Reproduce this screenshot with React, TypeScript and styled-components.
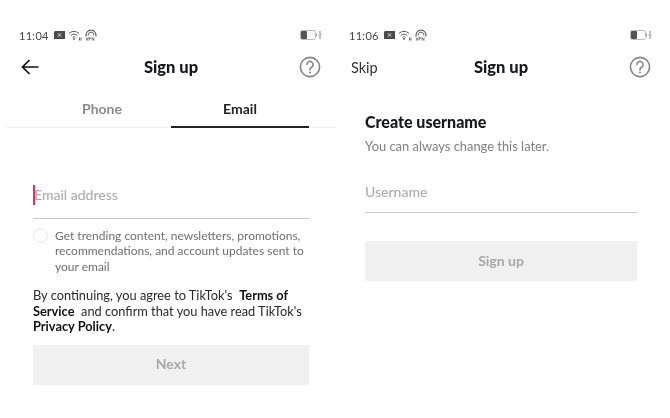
import styled, { createGlobalStyle } from "styled-components";

const GlobalStyle = createGlobalStyle`
  html, body {
    margin: 0;
    padding: 0;
    background: #fff;
  }
  * {
    box-sizing: border-box;
  }
`;

const Page = styled.div`
  width: 670px;
  height: 418px;
  padding-left: 6px;
  display: flex;
  overflow: hidden;
  background: #fff;
  font-family: "Lato", "Open Sans", sans-serif;
  filter: blur(0.35px);
`;

const Screen = styled.section`
  width: 330px;
  display: flex;
  flex-direction: column;
`;

const StatusBar = styled.div`
  height: 16px;
  margin-top: 27px;
  padding: 0 14px 0 13px;
  display: flex;
  align-items: center;
  justify-content: space-between;
`;

const StatusLeft = styled.div`
  display: flex;
  align-items: center;
  gap: 3px;
`;

const Time = styled.span`
  font-size: 11px;
  color: #444;
  letter-spacing: 0.3px;
  margin-right: 2px;
`;

const Header = styled.header`
  height: 34px;
  margin-top: 7px;
  padding: 0 15px 0 15px;
  display: grid;
  grid-template-columns: 40px 1fr 40px;
  align-items: center;
`;

const HeaderLeft = styled.div`
  display: flex;
  align-items: center;
`;

const HeaderRight = styled.div`
  display: flex;
  justify-content: flex-end;
`;

const Title = styled.h1`
  margin: 0;
  text-align: center;
  font-size: 16.5px;
  font-weight: 900;
  color: #16181f;
`;

const SkipLink = styled.span`
  font-size: 14.5px;
  color: #333;
`;

const Tabs = styled.div`
  height: 37px;
  margin-top: 7px;
  padding: 0 27px;
  display: grid;
  grid-template-columns: 138px 138px;
  border-bottom: 1px solid #f0f0f0;
`;

const Tab = styled.div<{ $active?: boolean }>`
  display: flex;
  align-items: center;
  justify-content: center;
  height: 37px;
  padding-bottom: ${(p) => (p.$active ? "0" : "2px")};
  font-size: 14px;
  font-weight: 700;
  color: ${(p) => (p.$active ? "#222" : "#8a8a8a")};
  border-bottom: ${(p) => (p.$active ? "2px solid #222" : "none")};
`;

const Body = styled.div<{ $top: number; $side: number }>`
  padding: ${(p) => p.$top}px ${(p) => p.$side}px 0;
  display: flex;
  flex-direction: column;
`;

const FieldRow = styled.div<{ $height: number }>`
  height: ${(p) => p.$height}px;
  display: flex;
  align-items: flex-start;
  border-bottom: 1px solid #c9c9c9;
`;

const Caret = styled.span`
  width: 2px;
  height: 20px;
  background: #d8336a;
  margin-top: 2px;
  margin-right: -1px;
  flex: none;
`;

const Placeholder = styled.span<{ $top: number }>`
  font-size: 14px;
  font-weight: 500;
  line-height: 22px;
  color: #adadad;
  padding-top: ${(p) => p.$top}px;
`;

const OptIn = styled.div`
  margin-top: 9px;
  display: flex;
  gap: 7px;
`;

const Radio = styled.span`
  width: 15px;
  height: 15px;
  border: 1px solid #e4e4e4;
  border-radius: 50%;
  flex: none;
`;

const OptInText = styled.p`
  margin: 0;
  width: 256px;
  font-size: 12px;
  line-height: 15.4px;
  color: #6f6f6f;
`;

const Legal = styled.p`
  margin: 14px 0 0;
  font-size: 12.8px;
  line-height: 15.5px;
  color: #2a2a2a;

  b {
    font-weight: 700;
    color: #111;
  }
`;

const SubmitButton = styled.button<{ $top: number }>`
  height: 40px;
  margin-top: ${(p) => p.$top}px;
  padding: 0 0 2px;
  border: none;
  background: #f0f0f0;
  font-family: inherit;
  font-size: 14px;
  font-weight: 700;
  color: #a9a9a9;
`;

const Heading = styled.h2`
  margin: 0;
  font-size: 16px;
  font-weight: 900;
  line-height: 20px;
  color: #16181f;
`;

const Subtitle = styled.p`
  margin: 6px 0 0;
  font-size: 12.9px;
  line-height: 16px;
  color: #808080;
`;

const BackIcon = () => (
  <svg width="18" height="16" viewBox="0 0 18 16" fill="none" stroke="#111" strokeWidth="1.7">
    <path d="M17.5 8H1.5M8.5 1L1.5 8l7 7" />
  </svg>
);

const HelpIcon = () => (
  <svg width="22" height="22" viewBox="0 0 22 22" fill="none" stroke="#858585" strokeWidth="1.6">
    <circle cx="11" cy="11" r="9.6" />
    <path d="M7.9 8.600a3.100 3.100 0 1 1 4.700 2.600c-1 .6-1.600 1.200-1.600 2.300v.4" strokeLinecap="round" />
    <circle cx="11" cy="16.400" r="1" fill="#858585" stroke="none" />
  </svg>
);

const SimIcon = () => (
  <svg width="11" height="8" viewBox="0 0 11 8">
    <path d="M1 0h10v8H0V1z" fill="#4a4a4a" />
    <path d="M3.800 2.200l3.400 3.600M7.200 2.200L3.800 5.800" stroke="#ddd" strokeWidth="1" />
  </svg>
);

const WifiIcon = () => (
  <svg width="14" height="11" viewBox="0 0 14 11" fill="none" stroke="#555" strokeWidth="1">
    <path d="M1 3.500c3-2.800 7-2.800 10 0M2.800 5.500c2-1.800 4.400-1.800 6.400 0M4.600 7.400c1-.9 1.800-.9 2.800 0" />
    <circle cx="6" cy="9" r=".9" fill="#555" stroke="none" />
    <path d="M11.500 7.500v3M13 7.500v3" strokeWidth=".9" />
  </svg>
);

const VpnIcon = () => (
  <svg width="12" height="12" viewBox="0 0 12 12" fill="none" stroke="#555">
    <path d="M1 7.500C.6 3.500 3 1 6 1s5.400 2.500 5 6.500" strokeWidth="1.100" />
    <path d="M3.200 6.500C3 4.500 4.300 3.200 6 3.200s3 1.300 2.800 3.300" strokeWidth="1" />
    <path d="M1 8.500l1 3 1-3M4 11.500v-3h1.200v1.400H4M7 11.500v-3l2 3v-3" strokeWidth=".7" />
  </svg>
);

const BatteryIcon = () => (
  <svg width="22" height="10" viewBox="0 0 22 10" fill="none">
    <rect x=".5" y=".5" width="15" height="9" rx="2" stroke="#bbb" />
    <rect x="1" y="1" width="6" height="8" rx="1" fill="#555" />
    <path d="M16.500 3.500v3" stroke="#999" />
    <path d="M20 1v3M20 6v3M18.500 5h3" stroke="#666" strokeWidth=".8" />
  </svg>
);

const Status = ({ time }: { time: string }) => (
  <StatusBar>
    <StatusLeft>
      <Time>{time}</Time>
      <SimIcon />
      <WifiIcon />
      <VpnIcon />
    </StatusLeft>
    <BatteryIcon />
  </StatusBar>
);

const App = () => (
  <>
    <GlobalStyle />
    <Page>
      <Screen>
        <Status time="11:04" />
        <Header>
          <HeaderLeft>
            <BackIcon />
          </HeaderLeft>
          <Title>Sign up</Title>
          <HeaderRight>
            <HelpIcon />
          </HeaderRight>
        </Header>
        <Tabs>
          <Tab>Phone</Tab>
          <Tab $active>Email</Tab>
        </Tabs>
        <Body $top={55} $side={27}>
          <FieldRow $height={36}>
            <Caret />
            <Placeholder $top={1}>Email address</Placeholder>
          </FieldRow>
          <OptIn>
            <Radio />
            <OptInText>
              Get trending content, newsletters, promotions, recommendations, and account updates
              sent to your email
            </OptInText>
          </OptIn>
          <Legal>
            By continuing, you agree to TikTok's&nbsp; <b>Terms of Service</b>&nbsp; and confirm
            that you have read TikTok's <b>Privacy Policy</b>.
          </Legal>
          <SubmitButton $top={10}>Next</SubmitButton>
        </Body>
      </Screen>
      <Screen>
        <Status time="11:06" />
        <Header>
          <HeaderLeft>
            <SkipLink>Skip</SkipLink>
          </HeaderLeft>
          <Title>Sign up</Title>
          <HeaderRight>
            <HelpIcon />
          </HeaderRight>
        </Header>
        <Body $top={28} $side={29}>
          <Heading>Create username</Heading>
          <Subtitle>You can always change this later.</Subtitle>
          <FieldRow $height={59}>
            <Placeholder $top={27}>Username</Placeholder>
          </FieldRow>
          <SubmitButton $top={28}>Sign up</SubmitButton>
        </Body>
      </Screen>
    </Page>
  </>
);

export default App;
